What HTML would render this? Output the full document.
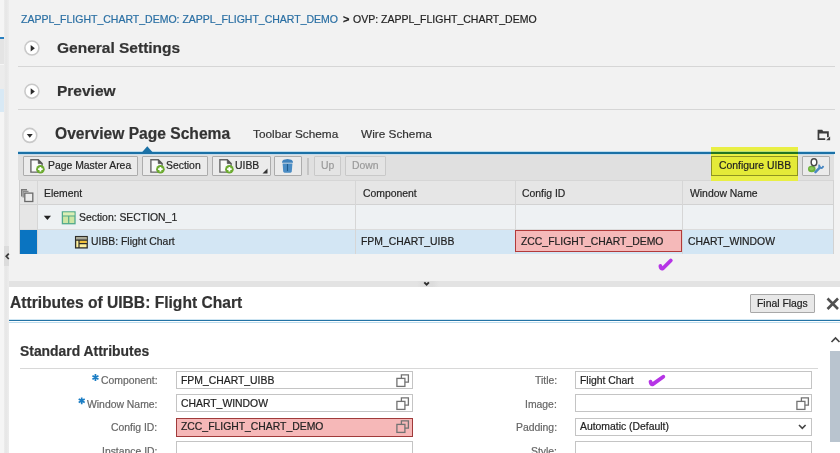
<!DOCTYPE html>
<html><head><meta charset="utf-8">
<style>
*{box-sizing:border-box}
html,body{margin:0;padding:0;width:840px;height:453px;overflow:hidden;background:#f2f2f2;font-family:"Liberation Sans",sans-serif;color:#333}
.a{position:absolute}
.t{position:absolute;white-space:pre;line-height:1;will-change:transform;-webkit-text-stroke:0.2px currentColor}
svg.a{overflow:visible}
</style></head><body>
<div class="a" style="left:0px;top:0px;width:840px;height:453px;background:#f2f2f2"></div>
<div class="a" style="left:0px;top:0px;width:5px;height:453px;background:#f5f5f5"></div>
<div class="a" style="left:0px;top:37px;width:4px;height:2px;background:#2a80c0"></div>
<div class="a" style="left:0px;top:39px;width:4px;height:26px;background:#e4e4e4"></div>
<div class="a" style="left:0px;top:65px;width:4px;height:24px;background:#ececec"></div>
<div class="a" style="left:0px;top:64px;width:4px;height:1px;background:#f6f6f6"></div>
<div class="a" style="left:0px;top:89px;width:4px;height:23px;background:#d8e9f5"></div>
<div class="a" style="left:4px;top:0px;width:5px;height:453px;background:linear-gradient(to right,#ececec,#e6e6e6 40%,#ededed)"></div>
<div class="t" style="left:21px;top:14.11px;font-size:10.5px;color:#2a6fa3;font-weight:400;">ZAPPL_FLIGHT_CHART_DEMO: ZAPPL_FLIGHT_CHART_DEMO</div>
<div class="t" style="left:342.8px;top:13.69px;font-size:11px;color:#1f1f1f;font-weight:700;">&gt;</div>
<div class="t" style="left:353.2px;top:14.11px;font-size:10.5px;color:#1f1f1f;font-weight:400;">OVP: ZAPPL_FLIGHT_CHART_DEMO</div>
<svg class="a" style="left:0;top:0" width="840" height="453"><circle cx="31.9" cy="48" r="7" fill="#fff" stroke="#c9c9c9" stroke-width="1.6"/><path d="M30.70 45.10 L34.90 48.30 L30.70 51.50 Z" fill="#2b2b2b"/></svg>
<div class="t" style="left:57.3px;top:39.88px;font-size:15.5px;color:#333;font-weight:700;">General Settings</div>
<div class="a" style="left:18px;top:66px;width:817px;height:1px;background:#d6d6d6"></div>
<svg class="a" style="left:0;top:0" width="840" height="453"><circle cx="31.9" cy="91.2" r="7" fill="#fff" stroke="#c9c9c9" stroke-width="1.6"/><path d="M30.70 88.30 L34.90 91.50 L30.70 94.70 Z" fill="#2b2b2b"/></svg>
<div class="t" style="left:57.3px;top:83.38px;font-size:15.5px;color:#333;font-weight:700;">Preview</div>
<div class="a" style="left:18px;top:109px;width:817px;height:1px;background:#d6d6d6"></div>
<svg class="a" style="left:0;top:0" width="840" height="453"><circle cx="29.75" cy="135.4" r="7" fill="#fff" stroke="#c9c9c9" stroke-width="1.6"/><path d="M26.75 133.90 L32.75 133.90 L29.75 137.80 Z" fill="#2b2b2b"/></svg>
<div class="t" style="left:55px;top:126.04px;font-size:15.6px;color:#333;font-weight:700;">Overview Page Schema</div>
<div class="t" style="left:253px;top:129.21px;font-size:11.8px;color:#333;font-weight:400;">Toolbar Schema</div>
<div class="t" style="left:361px;top:129.21px;font-size:11.8px;color:#333;font-weight:400;">Wire Schema</div>
<svg class="a" style="left:0;top:0" width="840" height="453"><g fill="#3c3c3c"><path d="M817.6 129.7 H822.2 L823.2 131.2 H828.8 V137.2 H827 V133.6 H819.3 V138.3 H825.2 V140 H817.6 Z"/><path d="M826.2 140.3 L830.1 136.6 V140.3 Z"/></g></svg>
<div class="a" style="left:18px;top:151px;width:817px;height:1px;background:#bcdcee"></div>
<div class="a" style="left:18px;top:152px;width:817px;height:2px;background:#1b71a6"></div>
<svg class="a" style="left:141px;top:146px" width="13" height="7"><path d="M0.8 6.5 L6.3 0.3 L11.8 6.5 Z" fill="#1b71a6"/></svg>
<div class="a" style="left:18px;top:154px;width:816px;height:26px;background:#e0e0e0"></div>
<div class="a" style="left:18px;top:154px;width:816px;height:1px;background:#c4dced"></div>
<div class="a" style="left:23px;top:156px;width:114.6px;height:20px;background:#ebebeb;border:1px solid #acacac;border-radius:1px"></div>
<svg class="a" style="left:29px;top:158px" width="16" height="16" viewBox="0 0 16 16"><path d="M1.9 1.8 H9.3 L13.1 5.6 V14.1 H1.9 Z" fill="#fafafa" stroke="#666" stroke-width="1.4"/><path d="M9.3 1.8 L13.1 5.6 H9.3 Z" fill="#555" stroke="#555" stroke-width="0.8"/><circle cx="11.4" cy="11.2" r="4.3" fill="#6cab30"/><path d="M9.1 11.2 H13.7 M11.4 8.9 V13.5" stroke="#fff" stroke-width="1.8"/></svg>
<div class="t" style="left:47.5px;top:161.00px;font-size:10.4px;color:#262626;font-weight:400;">Page Master Area</div>
<div class="a" style="left:142px;top:156px;width:65.5px;height:20px;background:#ebebeb;border:1px solid #acacac;border-radius:1px"></div>
<svg class="a" style="left:148.5px;top:158px" width="16" height="16" viewBox="0 0 16 16"><path d="M1.9 1.8 H9.3 L13.1 5.6 V14.1 H1.9 Z" fill="#fafafa" stroke="#666" stroke-width="1.4"/><path d="M9.3 1.8 L13.1 5.6 H9.3 Z" fill="#555" stroke="#555" stroke-width="0.8"/><circle cx="11.4" cy="11.2" r="4.3" fill="#6cab30"/><path d="M9.1 11.2 H13.7 M11.4 8.9 V13.5" stroke="#fff" stroke-width="1.8"/></svg>
<div class="t" style="left:166.3px;top:161.00px;font-size:10.4px;color:#262626;font-weight:400;">Section</div>
<div class="a" style="left:211.5px;top:156px;width:59.0px;height:20px;background:#ebebeb;border:1px solid #acacac;border-radius:1px"></div>
<svg class="a" style="left:218px;top:158px" width="16" height="16" viewBox="0 0 16 16"><path d="M1.9 1.8 H9.3 L13.1 5.6 V14.1 H1.9 Z" fill="#fafafa" stroke="#666" stroke-width="1.4"/><path d="M9.3 1.8 L13.1 5.6 H9.3 Z" fill="#555" stroke="#555" stroke-width="0.8"/><circle cx="11.4" cy="11.2" r="4.3" fill="#6cab30"/><path d="M9.1 11.2 H13.7 M11.4 8.9 V13.5" stroke="#fff" stroke-width="1.8"/></svg>
<div class="t" style="left:235.2px;top:161.00px;font-size:10.4px;color:#262626;font-weight:400;">UIBB</div>
<svg class="a" style="left:262px;top:168px" width="6" height="6"><path d="M5.5 0.5 V5.5 H0.5 Z" fill="#333"/></svg>
<div class="a" style="left:274px;top:156px;width:28px;height:20px;background:#ebebeb;border:1px solid #acacac;border-radius:1px"></div>
<svg class="a" style="left:0;top:0" width="840" height="453"><path d="M282 162.8 Q282 160 285 159.6 Q287.5 158.6 290 159.6 Q293 160 293 162.8 Z" fill="#3f82bc"/><path d="M282.6 163.4 H292.4 L291.8 171.6 Q291.6 172.7 290.5 172.7 H284.5 Q283.4 172.7 283.2 171.6 Z" fill="#4a8cc4"/><path d="M287.5 164 V171" stroke="#1f5c8e" stroke-width="1.1"/></svg>
<div class="a" style="left:307px;top:158px;width:1.5px;height:17px;background:#c4c4c4"></div>
<div class="a" style="left:314px;top:156px;width:27px;height:20px;background:#e4e4e4;border:1px solid #c9c9c9;border-radius:1px"></div>
<div class="t" style="left:321px;top:161.00px;font-size:10.4px;color:#9a9a9a;font-weight:400;">Up</div>
<div class="a" style="left:345px;top:156px;width:40.5px;height:20px;background:#e4e4e4;border:1px solid #c9c9c9;border-radius:1px"></div>
<div class="t" style="left:352.2px;top:161.00px;font-size:10.4px;color:#9a9a9a;font-weight:400;">Down</div>
<div class="a" style="left:710.7px;top:147px;width:87.8px;height:34.2px;background:#e9ef44;z-index:2"></div>
<div class="a" style="left:710.7px;top:151px;width:87.8px;height:1px;background:#b8dc70;z-index:2"></div>
<div class="a" style="left:710.7px;top:152px;width:87.8px;height:2px;background:#217522;z-index:2"></div>
<div class="a" style="left:711px;top:156px;width:87px;height:20px;background:#e4ea38;border:1px solid #8e9420;z-index:2"></div>
<div class="t" style="left:718.7px;top:161.00px;font-size:10.4px;color:#222;font-weight:400;z-index:3">Configure UIBB</div>
<div class="a" style="left:802px;top:156px;width:28px;height:20px;background:#ebebeb;border:1px solid #acacac;border-radius:1px"></div>
<svg class="a" style="left:0;top:0" width="840" height="453"><ellipse cx="811.8" cy="169" rx="3.8" ry="3.3" fill="#6db33a"/><ellipse cx="811.6" cy="168.6" rx="2.2" ry="1.6" fill="#8cc85a"/><ellipse cx="814" cy="162.2" rx="2.8" ry="3.5" fill="#fff" stroke="#4a4a4a" stroke-width="1.5"/><path d="M815.4 172.2 L820 167.4" stroke="#4a88c2" stroke-width="2.4" stroke-linecap="round"/><path d="M819.3 164.6 Q818.6 168.2 821.8 168 Q823 167.3 823.2 165.8" fill="none" stroke="#4a88c2" stroke-width="1.9"/></svg>
<div class="a" style="left:19px;top:180px;width:814px;height:25px;background:#e6e6e6"></div>
<div class="a" style="left:19px;top:204px;width:814px;height:1px;background:#d2d2d2"></div>
<div class="a" style="left:19px;top:179.5px;width:814px;height:1px;background:#d6d6d6"></div>
<div class="a" style="left:19px;top:205px;width:814px;height:24px;background:#eef1f3"></div>
<div class="a" style="left:19px;top:229px;width:814px;height:1px;background:#dcdcdc"></div>
<div class="a" style="left:19px;top:230px;width:814px;height:24px;background:#d3e6f4"></div>
<div class="a" style="left:19px;top:180px;width:1px;height:74px;background:#d0d0d0"></div>
<div class="a" style="left:20px;top:205px;width:16.5px;height:24px;background:#e6e6e6"></div>
<div class="a" style="left:20px;top:230px;width:16.5px;height:23.5px;background:#0a74c1"></div>
<div class="a" style="left:36.5px;top:180px;width:1px;height:74px;background:#d6d6d6"></div>
<div class="a" style="left:355px;top:180px;width:1px;height:74px;background:#d6d6d6"></div>
<div class="a" style="left:514.5px;top:180px;width:1px;height:74px;background:#d6d6d6"></div>
<div class="a" style="left:681.5px;top:180px;width:1px;height:74px;background:#d6d6d6"></div>
<div class="a" style="left:832.8px;top:180px;width:1px;height:74px;background:#d2d2d2"></div>
<svg class="a" style="left:19px;top:187px" width="16" height="16" viewBox="0 0 16 16"><path d="M2.7 9.5 V2.8 H8" fill="none" stroke="#777" stroke-width="1.4"/><path d="M4.2 10.5 V4.3 H9.5" fill="none" stroke="#8a8a8a" stroke-width="1.3"/><rect x="5.8" y="6.1" width="8" height="8.4" fill="#ececec" stroke="#6a6a6a" stroke-width="1.3"/></svg>
<div class="t" style="left:43.9px;top:188.80px;font-size:10.4px;color:#262626;font-weight:400;">Element</div>
<div class="t" style="left:363px;top:188.80px;font-size:10.4px;color:#262626;font-weight:400;">Component</div>
<div class="t" style="left:522px;top:188.80px;font-size:10.4px;color:#262626;font-weight:400;">Config ID</div>
<div class="t" style="left:690px;top:188.80px;font-size:10.4px;color:#262626;font-weight:400;">Window Name</div>
<svg class="a" style="left:43px;top:215px" width="9" height="6"><path d="M0.8 0.8 H8 L4.4 5 Z" fill="#222"/></svg>
<svg class="a" style="left:61px;top:211px" width="15" height="14" viewBox="0 0 15 14"><rect x="1.4" y="0.9" width="12.6" height="11.8" fill="#cde6a4" stroke="#52aa8c" stroke-width="1.3"/><rect x="2" y="1.5" width="11.4" height="3.2" fill="#dcefb6"/><path d="M1.4 5 H14 M7.7 5 V12.7" stroke="#52aa8c" stroke-width="1.2"/></svg>
<div class="t" style="left:78.9px;top:213.20px;font-size:10.4px;color:#262626;font-weight:400;">Section: SECTION_1</div>
<svg class="a" style="left:74px;top:235px" width="14" height="14" viewBox="0 0 14 14"><rect x="1.6" y="1.6" width="11.6" height="11.3" fill="#fdf09c" stroke="#2e2e2a" stroke-width="1.3"/><rect x="2.2" y="2.2" width="10.4" height="2.8" fill="#a8a89c"/><rect x="5.2" y="5.2" width="7.4" height="3.4" fill="#f2c23a"/><path d="M1.6 5.1 H13.2 M5 5.1 V12.9 M5 8.7 H13.2" stroke="#2e2e2a" stroke-width="1.2"/></svg>
<div class="t" style="left:91.2px;top:237.00px;font-size:10.4px;color:#262626;font-weight:400;">UIBB: Flight Chart</div>
<div class="t" style="left:361.2px;top:237.00px;font-size:10.4px;color:#222;font-weight:400;">FPM_CHART_UIBB</div>
<div class="a" style="left:515px;top:229.5px;width:167px;height:22.5px;background:#f5b9b9;border:1.2px solid #b23a3a"></div>
<div class="t" style="left:521px;top:237.00px;font-size:10.4px;color:#222;font-weight:400;">ZCC_FLIGHT_CHART_DEMO</div>
<div class="t" style="left:688px;top:237.00px;font-size:10.4px;color:#222;font-weight:400;">CHART_WINDOW</div>
<svg class="a" style="left:0;top:0" width="840" height="453"><path d="M660.4 266.0 Q660.8 269.20000000000005 662.8 268.5 L670.8 260.5" fill="none" stroke="#b634e6" stroke-width="3.8" stroke-linecap="round" stroke-linejoin="round"/></svg>
<div class="a" style="left:4px;top:246px;width:5px;height:20px;background:#dcdcdc"></div>
<svg class="a" style="left:5px;top:253px" width="5" height="7"><path d="M3.8 0.6 L1.2 3.3 L3.8 6" fill="none" stroke="#3a3a3a" stroke-width="1.7"/></svg>
<div class="a" style="left:9px;top:281px;width:831px;height:6px;background:#e3e3e3"></div>
<div class="a" style="left:417px;top:281px;width:22px;height:6px;background:linear-gradient(to right,#e3e3e3,#dcdcdc 30%,#dcdcdc 70%,#e3e3e3)"></div>
<svg class="a" style="left:0;top:0" width="840" height="453"><path d="M424.3 282.3 L426.6 284.6 L428.9 282.3" fill="none" stroke="#2e2e2e" stroke-width="1.9"/></svg>
<div class="a" style="left:9px;top:287px;width:831px;height:166px;background:#fff"></div>
<div class="t" style="left:9.8px;top:294.79px;font-size:15.6px;color:#333;font-weight:700;">Attributes of UIBB: Flight Chart</div>
<div class="a" style="left:750px;top:294px;width:65px;height:18.5px;background:#e8e8e8;border:1px solid #a8a8a8;border-radius:1px"></div>
<div class="t" style="left:756.8px;top:298.90px;font-size:10.4px;color:#222;font-weight:400;">Final Flags</div>
<svg class="a" style="left:826px;top:297px" width="14" height="14"><path d="M1.5 1.5 L12 12 M12 1.5 L1.5 12" stroke="#505050" stroke-width="2.6"/></svg>
<div class="a" style="left:9px;top:318.8px;width:831px;height:1px;background:#cfe6f3"></div>
<div class="a" style="left:9px;top:319.8px;width:831px;height:1.6px;background:#2372a4"></div>
<div class="a" style="left:9px;top:321.6px;width:831px;height:1px;background:#bcdcee"></div>
<div class="t" style="left:20px;top:345.23px;font-size:13.9px;color:#333;font-weight:700;">Standard Attributes</div>
<div class="a" style="left:20px;top:367.5px;width:798px;height:1.5px;background:#d8d8d8"></div>
<svg class="a" style="left:830px;top:335px" width="10" height="9"><path d="M1.5 7 L5.5 3 L9.5 7" fill="none" stroke="#444" stroke-width="1.7"/></svg>
<div class="a" style="left:829.5px;top:351px;width:10.5px;height:91px;background:#b9c4cf"></div>
<div class="t" style="right:682.5px;top:376.20px;font-size:10.4px;color:#666;font-weight:400;">Component:</div>
<svg class="a" style="left:0;top:0" width="840" height="453"><path d="M95.45 374.1 V380.9 M92.45 375.8 L98.45 379.2 M92.45 379.2 L98.45 375.8" stroke="#1a7dc4" stroke-width="1.7"/></svg>
<div class="a" style="left:176px;top:371px;width:237px;height:18px;background:#fff;border:1.2px solid #c4c4c4"></div>
<div class="t" style="left:181.25px;top:376.20px;font-size:10.4px;color:#222;font-weight:400;">FPM_CHART_UIBB</div>
<svg class="a" style="left:396px;top:373.5px" width="13" height="13" viewBox="0 0 13 13"><rect x="0.9" y="4.4" width="8" height="8" fill="none" stroke="#727272" stroke-width="1.3"/><path d="M5.4 4.4 V0.9 H12.4 V8.2 H8.9" fill="none" stroke="#727272" stroke-width="1.3"/></svg>
<div class="t" style="right:682.5px;top:400.20px;font-size:10.4px;color:#666;font-weight:400;">Window Name:</div>
<svg class="a" style="left:0;top:0" width="840" height="453"><path d="M81.7 397.40000000000003 V404.2 M78.7 399.1 L84.7 402.5 M78.7 402.5 L84.7 399.1" stroke="#1a7dc4" stroke-width="1.7"/></svg>
<div class="a" style="left:176px;top:394.3px;width:237px;height:18.0px;background:#fff;border:1.2px solid #c4c4c4"></div>
<div class="t" style="left:181.25px;top:399.20px;font-size:10.4px;color:#222;font-weight:400;">CHART_WINDOW</div>
<svg class="a" style="left:396px;top:396.8px" width="13" height="13" viewBox="0 0 13 13"><rect x="0.9" y="4.4" width="8" height="8" fill="none" stroke="#727272" stroke-width="1.3"/><path d="M5.4 4.4 V0.9 H12.4 V8.2 H8.9" fill="none" stroke="#727272" stroke-width="1.3"/></svg>
<div class="t" style="right:682.5px;top:423.20px;font-size:10.4px;color:#666;font-weight:400;">Config ID:</div>
<div class="a" style="left:176px;top:417.6px;width:237px;height:19.0px;background:#f6b8b8;border:1.4px solid #a03a3a"></div>
<div class="t" style="left:181.25px;top:422.20px;font-size:10.4px;color:#222;font-weight:400;">ZCC_FLIGHT_CHART_DEMO</div>
<svg class="a" style="left:396px;top:420.1px" width="13" height="13" viewBox="0 0 13 13"><rect x="0.9" y="4.4" width="8" height="8" fill="none" stroke="#727272" stroke-width="1.3"/><path d="M5.4 4.4 V0.9 H12.4 V8.2 H8.9" fill="none" stroke="#727272" stroke-width="1.3"/></svg>
<div class="t" style="right:682.5px;top:446.70px;font-size:10.4px;color:#666;font-weight:400;">Instance ID:</div>
<div class="a" style="left:176px;top:440.9px;width:237px;height:18.0px;background:#fff;border:1.2px solid #c4c4c4"></div>
<div class="t" style="right:283px;top:376.20px;font-size:10.4px;color:#666;font-weight:400;">Title:</div>
<div class="a" style="left:575px;top:371px;width:237px;height:18px;background:#fff;border:1.2px solid #c4c4c4"></div>
<div class="t" style="right:283px;top:400.20px;font-size:10.4px;color:#666;font-weight:400;">Image:</div>
<div class="a" style="left:575px;top:394.3px;width:237px;height:18.0px;background:#fff;border:1.2px solid #c4c4c4"></div>
<div class="t" style="right:283px;top:423.20px;font-size:10.4px;color:#666;font-weight:400;">Padding:</div>
<div class="a" style="left:575px;top:417.6px;width:237px;height:18.0px;background:#fff;border:1.2px solid #c4c4c4"></div>
<div class="t" style="right:283px;top:446.70px;font-size:10.4px;color:#666;font-weight:400;">Style:</div>
<div class="a" style="left:575px;top:440.9px;width:237px;height:18.0px;background:#fff;border:1.2px solid #c4c4c4"></div>
<svg class="a" style="left:796px;top:396.8px" width="13" height="13" viewBox="0 0 13 13"><rect x="0.9" y="4.4" width="8" height="8" fill="none" stroke="#727272" stroke-width="1.3"/><path d="M5.4 4.4 V0.9 H12.4 V8.2 H8.9" fill="none" stroke="#727272" stroke-width="1.3"/></svg>
<div class="t" style="left:580px;top:376.20px;font-size:10.4px;color:#222;font-weight:400;">Flight Chart</div>
<svg class="a" style="left:0;top:0" width="840" height="453"><path d="M650.5 381.59999999999997 Q650.9 384.8 652.9 384.09999999999997 L663.3 376.7" fill="none" stroke="#b634e6" stroke-width="3.8" stroke-linecap="round" stroke-linejoin="round"/></svg>
<div class="t" style="left:580px;top:422.20px;font-size:10.4px;color:#222;font-weight:400;">Automatic (Default)</div>
<svg class="a" style="left:798px;top:424px" width="9" height="6"><path d="M1 1 L4.3 4.3 L7.6 1" fill="none" stroke="#444" stroke-width="1.6"/></svg>
</body></html>
